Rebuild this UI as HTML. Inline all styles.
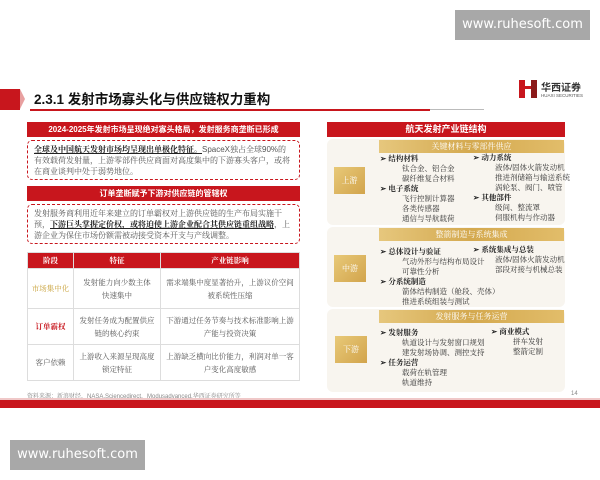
<!DOCTYPE html>
<html><head><meta charset="utf-8"><style>
*{margin:0;padding:0;box-sizing:border-box}
body{width:600px;height:480px;background:#fff;position:relative;overflow:hidden;font-family:"Liberation Sans","Noto Serif CJK SC",serif;color:#333}
.a{position:absolute;white-space:nowrap}
.s{font-family:"Liberation Sans","Noto Sans CJK SC",sans-serif}
.red{background:#c8161d;color:#fff;font-weight:bold;text-align:center}
.dash{border:1.5px dashed #c8161d;border-radius:5px}
.t{font-size:7.5px;line-height:10px}
.b{font-weight:bold;color:#222}
.gold{background:linear-gradient(90deg,#e6c77d,#d4a94f,#e2bd6a);color:#fff;text-align:center;font-size:8px;line-height:13px}
.lab{background:linear-gradient(135deg,#e8c978,#d2a44c);color:#fff;font-size:8px;text-align:center}
.sec{background:#f8f5ef;border-radius:6px}
td{border:1px solid #ddd;font-size:7.5px;text-align:center;line-height:13px;color:#555}
.wm{position:absolute;width:135px;height:30px;background:#a8a8a8;color:#fff;font-size:13px;line-height:30px;text-align:center;font-family:"DejaVu Sans",sans-serif}
</style></head><body>
<div class="wm" style="left:455px;top:10px">www.ruhesoft.com</div>

<div class="a" style="left:0;top:89px;width:20px;height:21px;background:#c8161d"></div>
<div class="a" style="left:20px;top:89px;width:0;height:0;border-top:10.5px solid transparent;border-bottom:10.5px solid transparent;border-left:5px solid #e8a0a0"></div>
<div class="a s" style="left:34px;top:90px;font-size:13.5px;font-weight:bold;color:#111;line-height:20px">2.3.1 发射市场寡头化与供应链权力重构</div>
<div class="a" style="left:30px;top:109px;width:400px;height:1.5px;background:#c8161d"></div>
<div class="a" style="left:430px;top:109px;width:54px;height:1px;background:#bbb"></div>
<div class="a" style="left:519px;top:80px;width:6px;height:18px;background:#c8161d"></div>
<div class="a" style="left:525px;top:86px;width:8px;height:3px;background:#c8161d"></div>
<div class="a" style="left:531px;top:80px;width:6px;height:18px;background:#8b1a1a"></div>
<div class="a s" style="left:541px;top:79px;font-size:10px;font-weight:bold;color:#333">华西证券</div>
<div class="a s" style="left:541px;top:93px;font-size:4.5px;color:#555">HUAXI SECURITIES</div>

<div class="a red s" style="left:27px;top:122px;width:273px;height:15px;font-size:8px;line-height:15px">2024-2025年发射市场呈现绝对寡头格局，发射服务商垄断已形成</div>
<div class="a dash" style="left:27px;top:140px;width:273px;height:40px;padding:3px 6px;white-space:normal;color:#555;font-size:8px;line-height:11px"><span class="b" style="text-decoration:underline">全球及中国航天发射市场均呈现出单极化特征。</span>SpaceX独占全球90%的有效载荷发射量，上游零部件供应商面对高度集中的下游寡头客户，或将在商业谈判中处于弱势地位。</div>
<div class="a red s" style="left:27px;top:186px;width:273px;height:15px;font-size:8px;line-height:15px">订单垄断赋予下游对供应链的管辖权</div>
<div class="a dash" style="left:27px;top:204px;width:273px;height:40px;padding:3px 6px;white-space:normal;color:#555;font-size:8px;line-height:11px">发射服务商利用近年来建立的订单霸权对上游供应链的生产布局实施干预，<span class="b" style="text-decoration:underline">下游巨头掌握定价权，或将迫使上游企业配合其供应链重组战略</span>，上游企业为保住市场份额需被动接受资本开支与产线调整。</div>

<table class="a" style="left:27px;top:252px;width:273px;border-collapse:collapse">
<tr style="height:16px"><td class="red" style="width:46px;font-size:7.5px">阶段</td><td class="red" style="width:87px">特征</td><td class="red">产业链影响</td></tr>
<tr style="height:40px"><td style="color:#c9a23a">市场集中化</td><td>发射能力向少数主体<br>快速集中</td><td>需求端集中度显著抬升，上游议价空间<br>被系统性压缩</td></tr>
<tr style="height:36px"><td style="color:#c8161d;font-weight:bold">订单霸权</td><td>发射任务成为配置供应<br>链的核心约束</td><td>下游通过任务节奏与技术标准影响上游<br>产能与投资决策</td></tr>
<tr style="height:36px"><td>客户依赖</td><td>上游收入来源呈现高度<br>锁定特征</td><td>上游缺乏横向比价能力，利润对单一客<br>户变化高度敏感</td></tr>
</table>

<div class="a" style="left:27px;top:391px;font-size:6px;color:#888">资料来源：新浪财经，NASA,Sciencedirect，Modusadvanced,华西证券研究所等</div>
<div class="a" style="left:571px;top:391px;font-size:6px;color:#888">14</div>
<div class="a" style="left:0;top:398px;width:600px;height:2px;background:#f0c8c8"></div>
<div class="a" style="left:0;top:400px;width:600px;height:8px;background:#c8161d"></div>

<div class="a red s" style="left:327px;top:122px;width:238px;height:15px;font-size:9px;line-height:15px">航天发射产业链结构</div>
<div class="a sec" style="left:327px;top:139px;width:238px;height:86px"></div>
<div class="a sec" style="left:327px;top:227px;width:238px;height:80px"></div>
<div class="a sec" style="left:327px;top:309px;width:238px;height:83px"></div>
<div class="a gold" style="left:379px;top:140px;width:185px;height:13px">关键材料与零部件供应</div>
<div class="a gold" style="left:379px;top:228px;width:185px;height:13px">整箭制造与系统集成</div>
<div class="a gold" style="left:379px;top:310px;width:185px;height:13px">发射服务与任务运营</div>
<div class="a lab" style="left:334px;top:167px;width:31px;height:27px;line-height:27px">上游</div>
<div class="a lab" style="left:334px;top:255px;width:32px;height:27px;line-height:27px">中游</div>
<div class="a lab" style="left:335px;top:336px;width:32px;height:27px;line-height:27px">下游</div>

<div class="a t" style="left:380px;top:154px"><span class="b">➢ 结构材料</span><br><span style="padding-left:22px">钛合金、铝合金</span><br><span style="padding-left:22px">碳纤维复合材料</span><br><span class="b">➢ 电子系统</span><br><span style="padding-left:22px">飞行控制计算器</span><br><span style="padding-left:22px">各类传感器</span><br><span style="padding-left:22px">通信与导航载荷</span></div>
<div class="a t" style="left:473px;top:153px"><span class="b">➢ 动力系统</span><br><span style="padding-left:22px">液体/固体火箭发动机</span><br><span style="padding-left:22px">推进剂储箱与输送系统</span><br><span style="padding-left:22px">涡轮泵、阀门、喷管</span><br><span class="b">➢ 其他部件</span><br><span style="padding-left:22px">级间、整流罩</span><br><span style="padding-left:22px">伺服机构与作动器</span></div>

<div class="a t" style="left:380px;top:247px"><span class="b">➢ 总体设计与验证</span><br><span style="padding-left:22px">气动外形与结构布局设计</span><br><span style="padding-left:22px">可靠性分析</span><br><span class="b">➢ 分系统制造</span><br><span style="padding-left:22px">箭体结构制造（舱段、壳体）</span><br><span style="padding-left:22px">推进系统组装与测试</span></div>
<div class="a t" style="left:473px;top:245px"><span class="b">➢ 系统集成与总装</span><br><span style="padding-left:22px">液体/固体火箭发动机</span><br><span style="padding-left:22px">部段对接与机械总装</span></div>

<div class="a t" style="left:380px;top:328px"><span class="b">➢ 发射服务</span><br><span style="padding-left:22px">轨道设计与发射窗口规划</span><br><span style="padding-left:22px">建发射场协调、测控支持</span><br><span class="b">➢ 任务运营</span><br><span style="padding-left:22px">载荷在轨管理</span><br><span style="padding-left:22px">轨道维持</span></div>
<div class="a t" style="left:491px;top:327px"><span class="b">➢ 商业模式</span><br><span style="padding-left:22px">拼车发射</span><br><span style="padding-left:22px">整箭定制</span></div>

<div class="wm" style="left:10px;top:440px">www.ruhesoft.com</div>
</body></html>
